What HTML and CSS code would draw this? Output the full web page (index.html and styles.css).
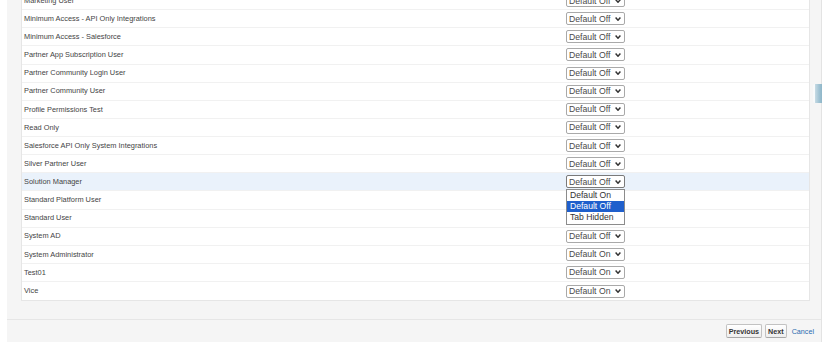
FILE: index.html
```html
<!DOCTYPE html>
<html>
<head>
<meta charset="utf-8">
<link rel="stylesheet" href="styles.css">
</head>
<body>
<div class="page">
  <div class="panel">
    <div class="table">
      <div class="row"><span class="label">Marketing User</span><span class="cell"><span class="sel">Default Off<svg class="chev" viewBox="0 0 6 4"><polyline points="0.6,0.6 3,3.2 5.4,0.6"/></svg></span></span></div>
      <div class="row"><span class="label">Minimum Access - API Only Integrations</span><span class="cell"><span class="sel">Default Off<svg class="chev" viewBox="0 0 6 4"><polyline points="0.6,0.6 3,3.2 5.4,0.6"/></svg></span></span></div>
      <div class="row"><span class="label">Minimum Access - Salesforce</span><span class="cell"><span class="sel">Default Off<svg class="chev" viewBox="0 0 6 4"><polyline points="0.6,0.6 3,3.2 5.4,0.6"/></svg></span></span></div>
      <div class="row"><span class="label">Partner App Subscription User</span><span class="cell"><span class="sel">Default Off<svg class="chev" viewBox="0 0 6 4"><polyline points="0.6,0.6 3,3.2 5.4,0.6"/></svg></span></span></div>
      <div class="row"><span class="label">Partner Community Login User</span><span class="cell"><span class="sel">Default Off<svg class="chev" viewBox="0 0 6 4"><polyline points="0.6,0.6 3,3.2 5.4,0.6"/></svg></span></span></div>
      <div class="row"><span class="label">Partner Community User</span><span class="cell"><span class="sel">Default Off<svg class="chev" viewBox="0 0 6 4"><polyline points="0.6,0.6 3,3.2 5.4,0.6"/></svg></span></span></div>
      <div class="row"><span class="label">Profile Permissions Test</span><span class="cell"><span class="sel">Default Off<svg class="chev" viewBox="0 0 6 4"><polyline points="0.6,0.6 3,3.2 5.4,0.6"/></svg></span></span></div>
      <div class="row"><span class="label">Read Only</span><span class="cell"><span class="sel">Default Off<svg class="chev" viewBox="0 0 6 4"><polyline points="0.6,0.6 3,3.2 5.4,0.6"/></svg></span></span></div>
      <div class="row"><span class="label">Salesforce API Only System Integrations</span><span class="cell"><span class="sel">Default Off<svg class="chev" viewBox="0 0 6 4"><polyline points="0.6,0.6 3,3.2 5.4,0.6"/></svg></span></span></div>
      <div class="row"><span class="label">Silver Partner User</span><span class="cell"><span class="sel">Default Off<svg class="chev" viewBox="0 0 6 4"><polyline points="0.6,0.6 3,3.2 5.4,0.6"/></svg></span></span></div>
      <div class="row row-hover"><span class="label">Solution Manager</span><span class="cell"><span class="sel sel-open">Default Off<svg class="chev" viewBox="0 0 6 4"><polyline points="0.6,0.6 3,3.2 5.4,0.6"/></svg></span>
        <span class="menu">
          <span class="opt">Default On</span>
          <span class="opt opt-active">Default Off</span>
          <span class="opt">Tab Hidden</span>
        </span></span></div>
      <div class="row"><span class="label">Standard Platform User</span><span class="cell"><span class="sel sel-covered">Default Off<svg class="chev" viewBox="0 0 6 4"><polyline points="0.6,0.6 3,3.2 5.4,0.6"/></svg></span></span></div>
      <div class="row"><span class="label">Standard User</span><span class="cell"><span class="sel sel-covered">Default Off<svg class="chev" viewBox="0 0 6 4"><polyline points="0.6,0.6 3,3.2 5.4,0.6"/></svg></span></span></div>
      <div class="row"><span class="label">System AD</span><span class="cell"><span class="sel">Default Off<svg class="chev" viewBox="0 0 6 4"><polyline points="0.6,0.6 3,3.2 5.4,0.6"/></svg></span></span></div>
      <div class="row"><span class="label">System Administrator</span><span class="cell"><span class="sel">Default On<svg class="chev" viewBox="0 0 6 4"><polyline points="0.6,0.6 3,3.2 5.4,0.6"/></svg></span></span></div>
      <div class="row"><span class="label">Test01</span><span class="cell"><span class="sel">Default On<svg class="chev" viewBox="0 0 6 4"><polyline points="0.6,0.6 3,3.2 5.4,0.6"/></svg></span></span></div>
      <div class="row row-last"><span class="label">Vice</span><span class="cell"><span class="sel">Default On<svg class="chev" viewBox="0 0 6 4"><polyline points="0.6,0.6 3,3.2 5.4,0.6"/></svg></span></span></div>
    </div>
    <div class="footer">
      <button class="btn">Previous</button>
      <button class="btn">Next</button>
      <a class="cancel" href="#">Cancel</a>
    </div>
  </div>
  <div class="handle"></div>
</div>
</body>
</html>
```
FILE: styles.css
```css
html, body {
  margin: 0;
  padding: 0;
  background: #ffffff;
  overflow: hidden;
}

body {
  font-family: "Liberation Sans", Arial, sans-serif;
  color: #3a3a3a;
}

.page {
  position: relative;
  padding-left: 7px;
  margin-top: -9px;
}

.panel {
  box-sizing: border-box;
  width: 815px;
  background: #f5f5f5;
  border-right: 1px solid #e3e3e3;
}

.table {
  margin: 0 11px 0 14px;
  background: #ffffff;
  border: 1px solid #e6e6e6;
}

.row {
  display: grid;
  grid-template-columns: 544px 1fr;
  align-items: center;
  height: 18.13px;
  box-sizing: border-box;
  border-bottom: 1px solid #f1f1f1;
}

.row-last {
  border-bottom: none;
}

.row-hover {
  background: #eaf2fb;
}

.label {
  padding-left: 2px;
  font-size: 7.4px;
  line-height: 1;
  color: #444444;
  white-space: nowrap;
}

.cell {
  position: relative;
  display: flex;
  align-items: center;
}

.sel {
  box-sizing: border-box;
  display: inline-flex;
  align-items: center;
  width: 59px;
  height: 13px;
  padding-left: 2px;
  border: 1px solid #a9a9a9;
  border-radius: 2px;
  background: #ffffff;
  font-size: 8.7px;
  color: #4a4a4a;
  white-space: nowrap;
}

.sel-open {
  border-color: #7a7a7a;
}

.sel-covered {
  visibility: hidden;
}

.chev {
  width: 6px;
  height: 4px;
  margin-left: auto;
  margin-right: 3px;
  fill: none;
  stroke: #333;
  stroke-width: 1.5;
}

.menu {
  position: absolute;
  left: 0;
  top: 13.5px;
  z-index: 5;
  box-sizing: border-box;
  width: 59px;
  display: flex;
  flex-direction: column;
  background: #ffffff;
  border: 1px solid #8c8c8c;
  padding-bottom: 1px;
}

.opt {
  height: 11.2px;
  line-height: 11.2px;
  padding-left: 3px;
  font-size: 8.6px;
  color: #333;
  white-space: nowrap;
}

.opt-active {
  background: #1f5fcc;
  color: #ffffff;
}

.footer {
  margin-top: 18px;
  border-top: 1px solid #e6e6e6;
  display: flex;
  justify-content: flex-end;
  align-items: center;
  gap: 3px;
  padding: 4px 7px 4px 0;
}

.btn {
  box-sizing: border-box;
  height: 14px;
  padding: 0 2px;
  font-family: "Liberation Sans", Arial, sans-serif;
  font-weight: bold;
  font-size: 7.2px;
  color: #333;
  background: linear-gradient(#ffffff, #eeeeee);
  border: 1px solid #c2c2c2;
  border-bottom-color: #a8a8a8;
  border-radius: 2px;
}

.cancel {
  margin-left: 2px;
  font-size: 7.2px;
  color: #2a6cb0;
  text-decoration: none;
}

.handle {
  position: absolute;
  left: 813px;
  top: 93px;
  width: 9px;
  height: 19px;
  box-sizing: border-box;
  border-left: 2px solid #f7fafb;
  border-radius: 2px 0 0 2px;
  background: linear-gradient(90deg, #c7dbe4 0%, #9fc2d3 60%, #8fb6c8 100%);
}
```
